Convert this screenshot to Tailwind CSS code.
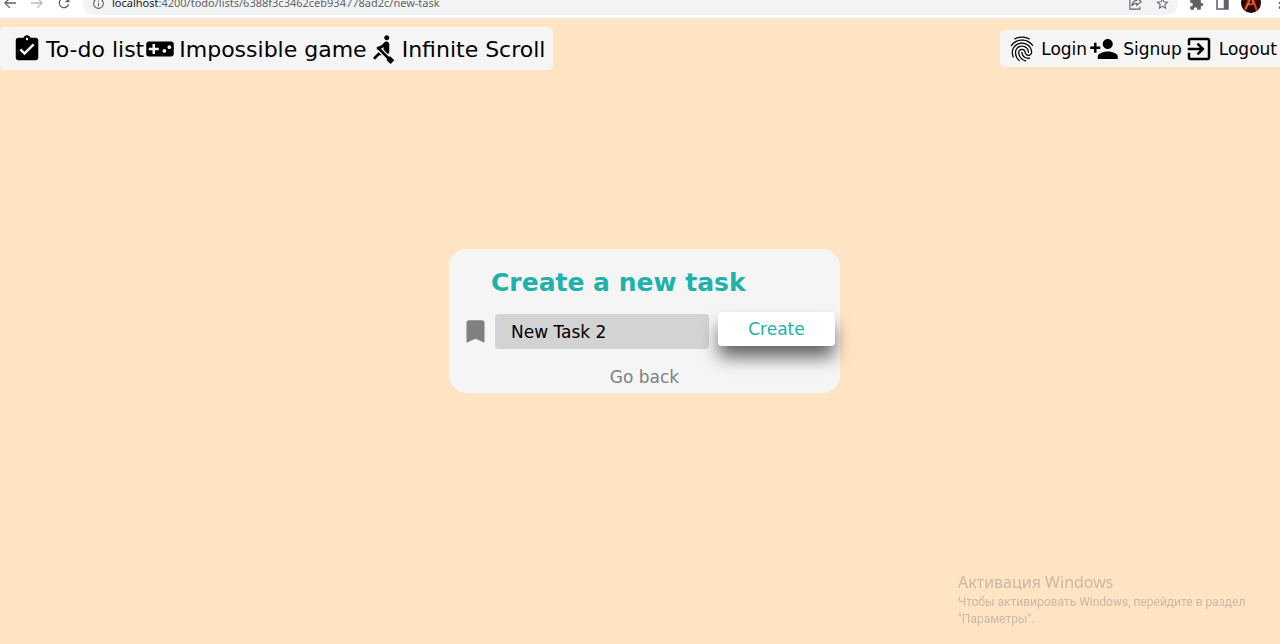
<!DOCTYPE html>
<html lang="en">
<head>
<meta charset="utf-8">
<meta name="viewport" content="width=device-width, initial-scale=1">
<title>New task</title>
<script src="https://cdn.jsdelivr.net/npm/@tailwindcss/browser@4"></script>
</head>
<body class="flex min-h-screen flex-col bg-[#ffe4c4] font-[Verdana,'DejaVu_Sans',sans-serif] text-black">

<!-- Browser toolbar, its upper part scrolled out of view -->
<header class="flex h-[18px] shrink-0 items-end overflow-hidden bg-white font-['Noto_Sans',sans-serif] text-[#5f6368]">
  <div class="flex h-[30px] w-full items-center">
    <div class="flex w-[83px] shrink-0 items-center gap-[11px] pl-[2px]">
      <button aria-label="Back"><svg class="size-4" viewBox="0 0 24 24" fill="currentColor"><path d="M21 11H6.8l5.6-5.6L11 4l-8 8 8 8 1.4-1.4L6.800 13H21z"/></svg></button>
      <button aria-label="Forward" class="text-[#babcbe]"><svg class="size-4" viewBox="0 0 24 24" fill="currentColor"><path d="M3 11h14.200l-5.600-5.600L13 4l8 8-8 8-1.400-1.400 5.600-5.600H3z"/></svg></button>
      <button aria-label="Reload"><svg class="size-4" viewBox="0 0 24 24" fill="currentColor"><path d="M17.650 6.350A7.960 7.960 0 0 0 12 4a8 8 0 1 0 7.730 10h-2.080A6 6 0 1 1 12 6c1.660 0 3.140.69 4.220 1.780L13 11h7V4z"/></svg></button>
    </div>
    <div class="flex h-6 min-w-0 flex-1 items-center rounded-full bg-[#f1f3f4] pr-2 pl-[9px]">
      <svg class="mr-[7px] size-[13px]" viewBox="0 0 24 24" fill="currentColor"><path d="M11 17h2v-6h-2v6zm1-15a10 10 0 1 0 0 20 10 10 0 0 0 0-20zm0 18a8 8 0 1 1 0-16 8 8 0 0 1 0 16zM11 9h2V7h-2z"/></svg>
      <span class="flex-1 truncate pt-px text-[11px]"><span class="text-[#202124]">localhost</span>:4200/todo/lists/6388f3c3462ceb934778ad2c/new-task</span>
      <button aria-label="Share" class="mr-3"><svg class="size-[15px]" viewBox="0 0 24 24" fill="none" stroke="currentColor" stroke-width="1.800"><path d="M7 5H3v16h16v-4M14 3l7 6-7 6v-3.500c-4 0-6.500 1.500-8 4.500.5-5 3-8.500 8-9z"/></svg></button>
      <button aria-label="Bookmark"><svg class="size-[15px]" viewBox="0 0 24 24" fill="currentColor"><path d="M22 9.240l-7.190-.62L12 2 9.190 8.630 2 9.240l5.460 4.730L5.820 21 12 17.270 18.180 21l-1.630-7.030zM12 15.400l-3.760 2.270 1-4.280-3.320-2.880 4.380-.38L12 6.100l1.710 4.040 4.380.38-3.320 2.880 1 4.280z"/></svg></button>
    </div>
    <div class="flex shrink-0 items-center gap-[11px] pl-[11px]">
      <button aria-label="Extensions"><svg class="size-[15px]" viewBox="0 0 24 24" fill="currentColor"><path d="M20.500 11H19V7a2 2 0 0 0-2-2h-4V3.500a2.500 2.500 0 0 0-5 0V5H4a2 2 0 0 0-2 2v3.800h1.500a2.700 2.700 0 0 1 0 5.400H2V20a2 2 0 0 0 2 2h3.800v-1.500a2.700 2.700 0 0 1 5.400 0V22H17a2 2 0 0 0 2-2v-4h1.500a2.500 2.500 0 0 0 0-5z"/></svg></button>
      <button aria-label="Side panel"><svg class="size-[15px]" viewBox="0 0 24 24" fill="currentColor"><path fill-rule="evenodd" d="M2 2h20v20H2zM4.500 4.500v15H14v-15z"/></svg></button>
      <button aria-label="Profile"><svg class="size-5" viewBox="0 0 24 24"><circle cx="12" cy="12" r="12" fill="#2a0705"/><path d="M5 20 11 4h2l6 17M7 14l9-1" fill="none" stroke="#d9401c" stroke-width="2.500"/><path d="M6 19 12 6l3 7" fill="none" stroke="#f5a04a" stroke-width="1"/></svg></button>
      <button aria-label="Menu" class="-mr-2"><svg class="size-4" viewBox="0 0 24 24" fill="currentColor"><circle cx="12" cy="5" r="2"/><circle cx="12" cy="12" r="2"/><circle cx="12" cy="19" r="2"/></svg></button>
    </div>
  </div>
</header>

<div class="flex items-start justify-between border-t border-[#e8e4da] pt-2">
  <nav class="flex h-[43px] items-center gap-px rounded-[5px] bg-[#f5f5f5] pr-2 pl-3 text-[22px]">
    <a href="#todo" class="flex items-center gap-1"><svg class="size-[30px]" viewBox="0 0 24 24"><path d="M19 3h-4.180C14.400 1.840 13.300 1 12 1c-1.300 0-2.400.84-2.820 2H5c-1.100 0-2 .9-2 2v14c0 1.100.9 2 2 2h14c1.100 0 2-.9 2-2V5c0-1.100-.9-2-2-2zm-7 0c.55 0 1 .45 1 1s-.45 1-1 1-1-.45-1-1 .45-1 1-1zm-2 14l-4-4 1.410-1.410L10 14.170l6.590-6.590L18 9l-8 8z"/></svg><span class="pt-px">To-do list</span></a>
    <a href="#game" class="flex items-center gap-1"><svg class="size-[30px]" viewBox="0 0 24 24"><path d="M21 6H3c-1.100 0-2 .9-2 2v8c0 1.100.9 2 2 2h18c1.100 0 2-.9 2-2V8c0-1.100-.9-2-2-2zm-10 7H8v3H6v-3H3v-2h3V8h2v3h3v2zm4.500 2c-.83 0-1.500-.67-1.500-1.500s.67-1.500 1.500-1.500 1.500.67 1.500 1.500-.67 1.500-1.500 1.500zm4-3c-.83 0-1.500-.67-1.500-1.500S18.670 9 19.500 9s1.500.67 1.500 1.500-.67 1.500-1.500 1.500z"/></svg><span class="pt-px">Impossible game</span></a>
    <a href="#scroll" class="flex items-center gap-1"><svg class="size-[30px]" viewBox="0 0 24 24"><path d="M8.500 14.500L4 19l1.500 1.500L9 17h2l-2.500-2.500zM15 1c-1.100 0-2 .9-2 2s.9 2 2 2 2-.9 2-2-.9-2-2-2zm6 20.010L18 24l-2.990-3.010V19.500l-7.100-7.090c-.31.05-.61.07-.91.07v-2.160c1.660.03 3.610-.87 4.670-2.040l1.400-1.550c.19-.21.43-.38.69-.5.29-.14.62-.23.96-.23h.03C15.990 6.010 17 7.020 17 8.260v5.750c0 .84-.35 1.610-.92 2.160l-3.580-3.580v-2.270c-.63.52-1.430 1.020-2.290 1.390L16.500 18H18l3 3.010z"/></svg><span class="pt-px">Infinite Scroll</span></a>
  </nav>
  <nav class="mt-[3px] flex h-[37px] items-center gap-[2px] rounded-l-[5px] bg-[#f5f5f5] pr-[3px] pl-[7px] text-[17px]">
    <a href="#login" class="flex items-center gap-1"><svg class="size-[30px]" viewBox="0 0 24 24"><path d="M17.810 4.470c-.08 0-.16-.02-.23-.06C15.660 3.420 14 3 12.010 3c-1.980 0-3.860.47-5.570 1.410-.24.13-.54.04-.68-.2-.13-.24-.04-.55.2-.68C7.820 2.520 9.860 2 12.010 2c2.130 0 3.990.47 6.030 1.520.25.13.34.43.21.67-.09.18-.26.28-.44.28zM3.500 9.720c-.1 0-.2-.03-.29-.09-.23-.16-.28-.47-.12-.7.99-1.400 2.250-2.500 3.750-3.270C9.980 4.040 14 4.030 17.150 5.650c1.500.77 2.760 1.860 3.750 3.250.16.22.11.54-.12.7-.23.16-.54.11-.7-.12-.9-1.260-2.040-2.250-3.390-2.940-2.870-1.470-6.540-1.470-9.400.01-1.360.7-2.500 1.700-3.400 2.960-.08.14-.23.21-.39.21zm6.250 12.070c-.13 0-.26-.05-.35-.15-.87-.87-1.340-1.430-2.010-2.640-.69-1.230-1.050-2.730-1.050-4.340 0-2.970 2.540-5.390 5.660-5.390s5.660 2.420 5.660 5.390c0 .28-.22.5-.5.5s-.5-.22-.5-.5c0-2.420-2.090-4.390-4.660-4.390-2.570 0-4.660 1.970-4.660 4.390 0 1.440.32 2.770.93 3.850.64 1.150 1.080 1.640 1.850 2.420.19.2.19.51 0 .71-.11.1-.24.15-.37.15zm7.170-1.850c-1.190 0-2.240-.3-3.100-.89-1.490-1.010-2.380-2.650-2.380-4.390 0-.28.22-.5.5-.5s.5.22.5.5c0 1.410.72 2.740 1.940 3.560.71.48 1.540.71 2.540.71.24 0 .64-.03 1.040-.1.27-.05.53.13.58.41.05.27-.13.53-.41.58-.57.11-1.070.12-1.210.12zM14.910 22c-.04 0-.09-.01-.13-.02-1.590-.44-2.630-1.030-3.720-2.100-1.400-1.390-2.170-3.240-2.170-5.220 0-1.620 1.380-2.940 3.080-2.940 1.700 0 3.080 1.320 3.080 2.940 0 1.070.93 1.940 2.080 1.940s2.080-.87 2.080-1.940c0-3.770-3.250-6.830-7.250-6.830-2.840 0-5.440 1.580-6.610 4.030-.39.81-.59 1.760-.59 2.800 0 .78.07 2.010.67 3.610.1.26-.03.55-.29.64-.26.1-.55-.04-.64-.29-.49-1.310-.73-2.610-.73-3.960 0-1.200.23-2.290.68-3.240 1.330-2.790 4.280-4.600 7.510-4.600 4.550 0 8.250 3.510 8.250 7.830 0 1.620-1.380 2.940-3.080 2.940s-3.080-1.320-3.080-2.940c0-1.070-.93-1.940-2.080-1.940s-2.080.87-2.080 1.940c0 1.710.66 3.310 1.870 4.510.95.94 1.860 1.460 3.270 1.850.27.07.42.35.35.61-.05.23-.26.38-.47.38z"/></svg><span class="pt-0.5">Login</span></a>
    <a href="#signup" class="flex items-center gap-1"><svg class="size-[30px]" viewBox="0 0 24 24"><path d="M15 12c2.210 0 4-1.790 4-4s-1.790-4-4-4-4 1.790-4 4 1.790 4 4 4zm-9-2V7H4v3H1v2h3v3h2v-3h3v-2H6zm9 4c-2.670 0-8 1.340-8 4v2h16v-2c0-2.660-5.330-4-8-4z"/></svg><span class="pt-0.5">Signup</span></a>
    <a href="#logout" class="flex items-center gap-[5px]"><svg class="size-[30px]" viewBox="0 0 24 24"><path d="M10.090 15.590L11.500 17l5-5-5-5-1.410 1.410L12.670 11H3v2h9.670l-2.580 2.590zM19 3H5c-1.110 0-2 .9-2 2v4h2V5h14v14H5v-4H3v4c0 1.100.89 2 2 2h14c1.100 0 2-.9 2-2V5c0-1.100-.9-2-2-2z"/></svg><span class="pt-0.5">Logout</span></a>
  </nav>
</div>

<main class="flex flex-1 items-start justify-center pt-[179px] pl-[9px]">
  <form class="flex w-[391px] flex-col rounded-[18px] bg-[#f5f5f5] pt-4 pb-1">
    <h1 class="pl-[42px] text-[25px] leading-9 font-bold text-[#20b2aa]">Create a new task</h1>
    <div class="mt-[11px] flex items-start pr-[5px] pl-[13px]">
      <svg class="mt-[6px] mr-[6px] size-[27px] shrink-0 text-[#808080]" viewBox="0 0 24 24" fill="currentColor"><path d="M18 2H6c-1.100 0-2 .9-2 2v18l8-3.500 8 3.500V4c0-1.100-.9-2-2-2z"/></svg>
      <input type="text" aria-label="Task name" value="New Task 2" class="mt-[2px] h-[35px] min-w-0 flex-1 rounded-[4px] bg-[#d3d3d3] px-4 pt-px text-[17px] outline-none">
      <button type="button" class="ml-[9px] h-[34px] w-[117px] rounded-[4px] bg-white pt-px text-[17px] text-[#20b2aa] shadow-[0_12px_17px_-1px_rgba(0,0,0,0.6)]">Create</button>
    </div>
    <a href="#lists" class="mt-4 self-center text-[17px] leading-6 text-[#808080]">Go back</a>
  </form>
</main>

<!-- Windows activation notice lying over the page -->
<aside lang="ru" class="pointer-events-none fixed right-0 bottom-4 w-[322px] pr-6 text-[#c9b9a7]">
  <p class="font-['Noto_Sans',sans-serif] text-base leading-6">Активация Windows</p>
  <p class="font-[Roboto,sans-serif] text-xs leading-[17px]">Чтобы активировать Windows, перейдите в раздел "Параметры".</p>
</aside>
</body>
</html>
